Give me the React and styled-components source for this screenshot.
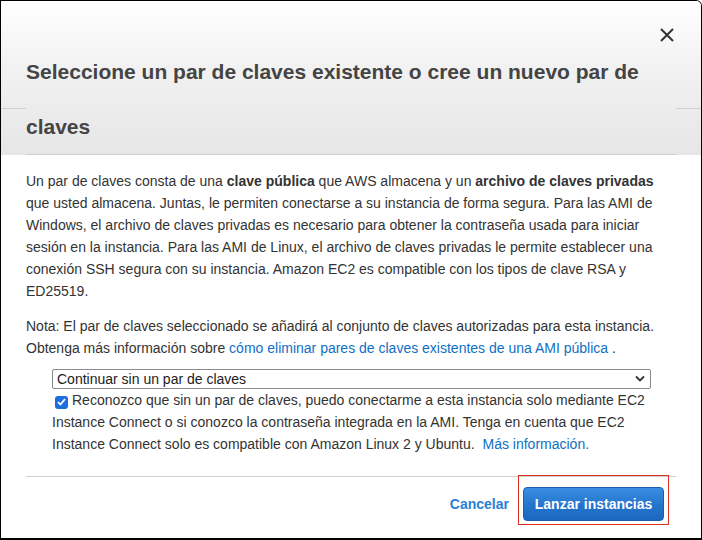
import React from "react";
import styled, { createGlobalStyle } from "styled-components";

const GlobalStyle = createGlobalStyle`
  body {
    margin: 0;
    font-family: "Liberation Sans", Arial, sans-serif;
    background: #ffffff;
  }
`;

const Modal = styled.div`
  position: relative;
  width: 702px;
  height: 540px;
  box-sizing: border-box;
  border: 1px solid #000;
  border-bottom-width: 2px;
  border-top-right-radius: 6px;
  overflow: hidden;
  display: flex;
  flex-direction: column;
  background: #fff;
`;

const Header = styled.div`
  position: relative;
  flex: none;
  padding: 0 25px;
  background: linear-gradient(to bottom, #ffffff 0%, #f1f1f1 45%, #e6e6e6 100%);

  /* edge segments of the header's base line */
  &::before,
  &::after {
    content: "";
    position: absolute;
    top: 107px;
    width: 25px;
    height: 1px;
    background: #cfcfcf;
  }
  &::before {
    left: 0;
  }
  &::after {
    right: 0;
  }
`;

const Title = styled.h2`
  margin: 0;
  padding-top: 43px;
  font-size: 21px;
  font-weight: 700;
  line-height: 55px;
  color: #444;
  border-bottom: 1px solid #cfcfcf;
`;

const CloseButton = styled.button`
  position: absolute;
  top: 26px;
  right: 26px;
  width: 16px;
  height: 16px;
  padding: 0;
  border: 0;
  background: none;
  cursor: pointer;
  display: flex;
  align-items: center;
  justify-content: center;
`;

const Body = styled.div`
  flex: 1;
  padding: 15px 25px 0;
  color: #333;
  font-size: 14px;
  line-height: 22px;
`;

const Para = styled.p`
  margin: 0 0 ${(p) => p.gap || 13}px;
`;

const Link = styled.a`
  color: #0f6fc6;
  text-decoration: none;
  cursor: pointer;
  margin-left: ${(p) => p.shift || 0}px;
`;

const SelectWrap = styled.div`
  position: relative;
  margin-left: 26px;
  width: 599px;
`;

const Select = styled.select`
  display: block;
  width: 100%;
  height: 20px;
  box-sizing: border-box;
  padding: 0 20px 0 4px;
  border: 1px solid #8a8a8a;
  border-radius: 2px;
  background: #fff;
  color: #222;
  font-family: "Liberation Sans", Arial, sans-serif;
  font-size: 14px;
  appearance: none;
  -webkit-appearance: none;
`;

const Chevron = styled.svg`
  position: absolute;
  right: 6px;
  top: 6px;
  pointer-events: none;
`;

const CheckLabel = styled.label`
  display: block;
  margin-left: 26px;
  width: 604px;
  color: #333;
`;

const CheckBox = styled.span`
  display: inline-flex;
  align-items: center;
  justify-content: center;
  width: 13px;
  height: 13px;
  margin: 0 4px 0 3px;
  vertical-align: -1px;
  border-radius: 3px;
  background: #1f6ee0;
`;

const Footer = styled.div`
  flex: none;
  height: 62px;
  margin: 0 25px;
  border-top: 1px solid #cfcfcf;
  box-sizing: border-box;
  display: flex;
  justify-content: flex-end;
  align-items: flex-start;
  gap: 14px;
  padding: 10px 12px 0 0;
`;

const CancelLink = styled.a`
  height: 34px;
  display: flex;
  align-items: center;
  color: #2a7fd6;
  font-size: 14px;
  font-weight: 700;
  cursor: pointer;
`;

const Focus = styled.div`
  position: relative;

  /* red highlight drawn round the primary action */
  &::after {
    content: "";
    position: absolute;
    top: -12px;
    bottom: -4px;
    left: -5px;
    right: -5px;
    border: 1px solid #d7311e;
    pointer-events: none;
  }
`;

const PrimaryButton = styled.button`
  height: 34px;
  width: 141px;
  padding: 0;
  border: 1px solid #1a5fae;
  border-radius: 4px;
  background: linear-gradient(to bottom, #3a8ee2 0%, #2474cc 55%, #1c68c0 100%);
  color: #fff;
  font-family: "Liberation Sans", Arial, sans-serif;
  font-size: 14px;
  font-weight: 700;
  cursor: pointer;
`;

export default function App() {
  return (
    <>
      <GlobalStyle />
      <Modal>
        <Header>
          <Title>Seleccione un par de claves existente o cree un nuevo par de claves</Title>
          <CloseButton aria-label="Cerrar">
            <svg width="14" height="14" viewBox="0 0 14 14">
              <path d="M1 1L13 13M13 1L1 13" stroke="#333" strokeWidth="2" />
            </svg>
          </CloseButton>
        </Header>
        <Body>
          <Para>
            Un par de claves consta de una <b>clave pública</b> que AWS almacena y un{" "}
            <b>archivo de claves privadas</b> que usted almacena. Juntas, le permiten
            conectarse a su instancia de forma segura. Para las AMI de Windows, el archivo
            de claves privadas es necesario para obtener la contraseña usada para iniciar
            sesión en la instancia. Para las AMI de Linux, el archivo de claves privadas le
            permite establecer una conexión SSH segura con su instancia. Amazon EC2 es
            compatible con los tipos de clave RSA y ED25519.
          </Para>
          <Para gap={10}>
            Nota: El par de claves seleccionado se añadirá al conjunto de claves autorizadas
            para esta instancia. Obtenga más información sobre{" "}
            <Link>cómo eliminar pares de claves existentes de una AMI pública</Link> .
          </Para>
          <SelectWrap>
            <Select defaultValue="none">
              <option value="none">Continuar sin un par de claves</option>
            </Select>
            <Chevron width="10" height="7" viewBox="0 0 10 7">
              <path d="M1 1.5L5 5.5L9 1.5" fill="none" stroke="#333" strokeWidth="1.8" />
            </Chevron>
          </SelectWrap>
          <CheckLabel>
            <CheckBox>
              <svg width="9" height="8" viewBox="0 0 9 8">
                <path d="M1 4.2L3.4 6.5L8 1" fill="none" stroke="#fff" strokeWidth="1.8" />
              </svg>
            </CheckBox>
            Reconozco que sin un par de claves, puedo conectarme a esta instancia solo
            mediante EC2 Instance Connect o si conozco la contraseña integrada en la AMI.
            Tenga en cuenta que EC2 Instance Connect solo es compatible con Amazon Linux 2 y
            Ubuntu.{" "}
            <Link shift={4}>Más información.</Link>
          </CheckLabel>
        </Body>
        <Footer>
          <CancelLink>Cancelar</CancelLink>
          <Focus>
            <PrimaryButton>Lanzar instancias</PrimaryButton>
          </Focus>
        </Footer>
      </Modal>
    </>
  );
}
